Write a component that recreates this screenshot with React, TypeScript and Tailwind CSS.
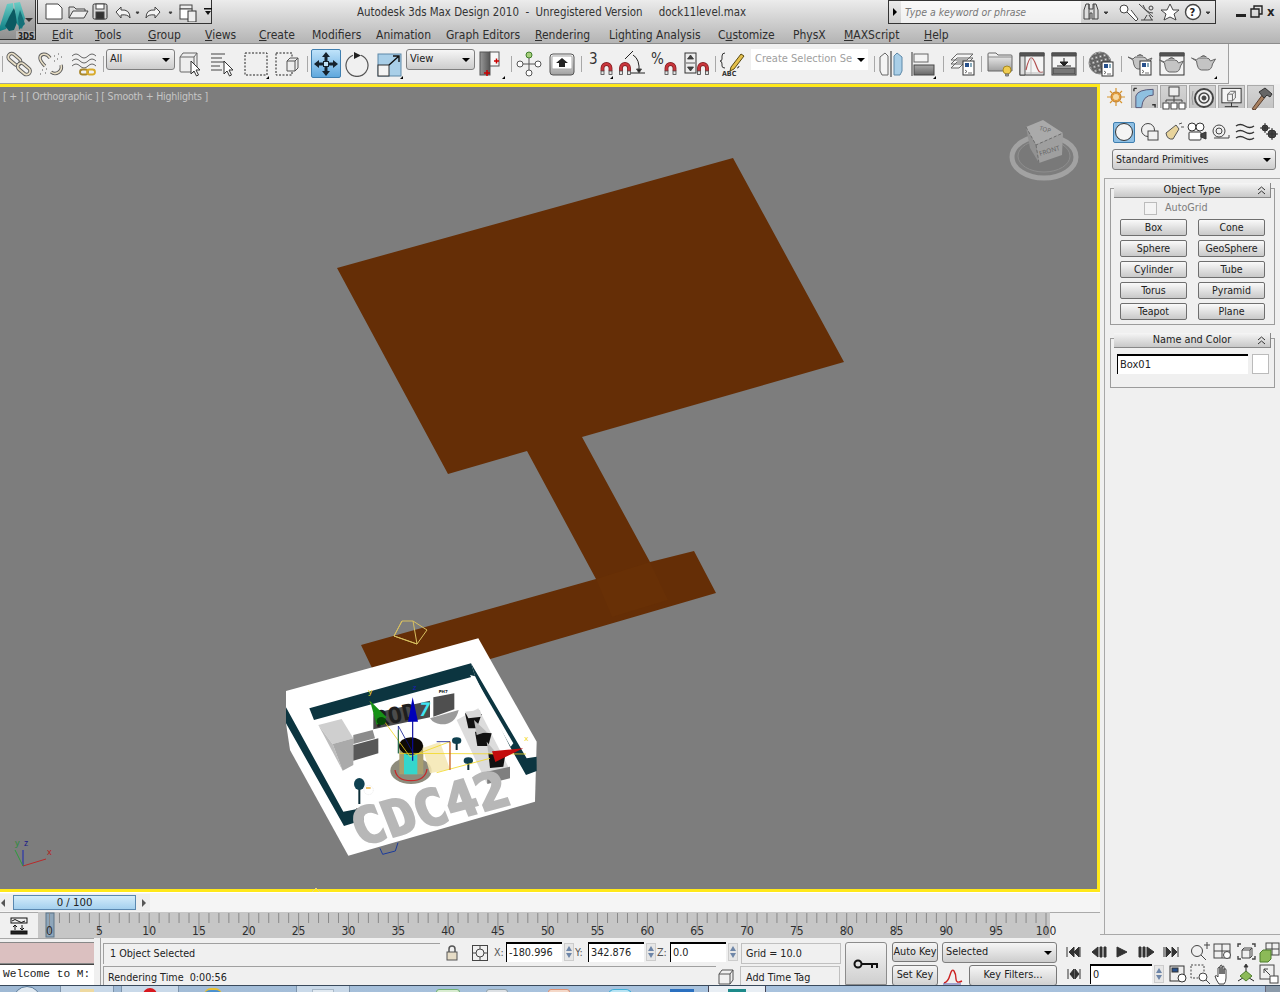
import React from "react";

const F = "font-['DejaVu_Sans_Condensed','Noto_Sans',sans-serif]";
const SF = "DejaVu Sans Condensed, Noto Sans, sans-serif";
type P = { children?: React.ReactNode; className?: string };

const Ic = ({ children, s = 26, vb = 26 }: { children?: React.ReactNode; s?: number; vb?: number }) => (
  <svg width={s} height={s} viewBox={`0 0 ${vb} ${vb}`} fill="none" stroke="#4c4c4c" strokeWidth="1">{children}</svg>
);
const Slot = ({ children, className = "", fly }: P & { fly?: boolean }) => (
  <div className={`relative w-[32px] h-[30px] shrink-0 flex items-center justify-center ${className}`}>
    {children}
    {fly && <div className="absolute right-[3px] bottom-[0px] w-0 h-0 border-l-[3px] border-l-transparent border-b-[3px] border-b-black" />}
  </div>
);
const Sep = ({ className = "" }: P) => <div className={`w-px h-[16px] shrink-0 bg-[#a8a8a8] ${className}`} />;
const Caret = ({ className = "" }: P) => (
  <div className={`w-0 h-0 border-l-[4px] border-r-[4px] border-t-[4px] border-l-transparent border-r-transparent border-t-black ${className}`} />
);
const Dropdown = ({ label, className = "" }: P & { label: string }) => (
  <div className={`h-[21px] shrink-0 flex items-center justify-between pl-[3px] pr-[4px] border border-[#7f7f7f] rounded-[3px] bg-gradient-to-b from-[#f6f6f6] to-[#cdcdcd] text-[#222] ${className}`}>
    <span>{label}</span>
    <Caret />
  </div>
);

const Chain = () => (
  <>
    {[0, 1].map((i) => (
      <g key={i} transform={i ? "translate(9.5 9.5)" : ""}>
        <rect x="1.5" y="4.5" width="14" height="7" rx="3.5" transform="rotate(40 8 8)" stroke="#5c5c5c" strokeWidth="3.6" />
        <rect x="1.5" y="4.5" width="14" height="7" rx="3.5" transform="rotate(40 8 8)" stroke="#e9dfc6" strokeWidth="1.8" />
      </g>
    ))}
  </>
);
const Unlink = () => (
  <>
    <path d="M12 7 C8 1 2 3 2 7 C2 10 4 12 7 15" stroke="#5c5c5c" strokeWidth="3.4" />
    <path d="M12 7 C8 1 2 3 2 7 C2 10 4 12 7 15" stroke="#e9dfc6" strokeWidth="1.6" />
    <path d="M23 14 C25 20 18 25 13 21" stroke="#5c5c5c" strokeWidth="3.4" />
    <path d="M23 14 C25 20 18 25 13 21" stroke="#e9dfc6" strokeWidth="1.6" />
    <path d="M16 5h1M20 3h1M19 8h1M23 6h1M16 10h1M4 19h1M8 18h1M2 23h1M7 22h1" stroke="#555" />
  </>
);
const Bind = () => (
  <>
    <path d="M1 5q4-4 8 0t8 0t8 0M1 10q4-4 8 0t8 0t8 0M1 15q4-4 8 0t8 0t8 0" stroke="#666" />
    <rect x="9" y="18.5" width="8" height="5" rx="2.5" stroke="#a8862a" strokeWidth="1.8" />
    <rect x="16" y="18.5" width="8" height="5" rx="2.5" stroke="#d8aa2a" strokeWidth="1.8" />
  </>
);
const CursorP = ({ x, y }: { x: number; y: number }) => (
  <path transform={`translate(${x} ${y})`} d="M0 0v13l3-3 2.500 5 2-1-2.500-5h4z" fill="#fff" stroke="#333" />
);
const SelObj = () => (
  <>
    <path d="M2 6l3-4h14v15l-3 4H3q-1 0-1-1zM2 6h14v15M16 6l3-4" stroke="#666" fill="#eee" />
    <CursorP x={13} y={10} />
  </>
);
const SelName = () => (
  <>
    <path d="M1 3h14M1 7h11M1 11h13M1 15h9M1 19h11" stroke="#444" />
    <CursorP x={14} y={10} />
  </>
);
const Dashed = () => <rect x="2" y="2" width="22" height="22" strokeDasharray="2 1.500" stroke="#222" />;
const Crossing = () => (
  <>
    <rect x="1" y="2" width="16" height="22" strokeDasharray="2 1.500" stroke="#222" />
    <path d="M12 10l3-3h8v10l-3 3h-8zM12 10h8v10M20 10l3-3" fill="#eee" stroke="#555" />
  </>
);
const Move = () => (
  <svg width="26" height="26" viewBox="0 0 26 26">
    <path d="M13 1l4 5h-2.500v4h-3V6H9zM13 25l-4-5h2.500v-4h3v4H17zM1 13l5-4v2.500h4v3H6V17zM25 13l-5 4v-2.500h-4v-3h4V9z" fill="#16222c" />
    <rect x="10.500" y="10.500" width="5" height="5" fill="#bfe0f4" stroke="#16222c" />
  </svg>
);
const Rotate = () => (
  <>
    <path d="M9 4.200A11 11 0 1 0 17 4.200" stroke="#555" strokeWidth="1.200" />
    <path d="M10 1l7 3.500-7 3.500z" fill="#222" stroke="none" />
  </>
);
const Scale = () => (
  <>
    <rect x="1" y="3" width="23" height="22" fill="#a9cfe8" stroke="#5d88a8" />
    <rect x="1" y="14" width="11" height="11" fill="#f4f4f4" stroke="#333" />
    <path d="M12 14L22 5M16 5h6v6" stroke="#111" strokeWidth="1.400" />
  </>
);
const PivotI = () => (
  <>
    <rect x="1" y="1" width="10" height="23" fill="url(#gr)" stroke="#555" />
    <rect x="11" y="1" width="9" height="14" fill="#f7f7f7" stroke="#555" />
    <path d="M5 22h6M8 19v6M15 10h5M17.500 7.500v5" stroke="#c00" strokeWidth="1.500" />
  </>
);
const Manip = () => (
  <>
    <circle cx="13" cy="4" r="3" fill="#a6cf7b" stroke="#3e7d2a" />
    <circle cx="4" cy="13" r="3" stroke="#555" fill="#fff" />
    <circle cx="22" cy="13" r="3" stroke="#555" fill="#fff" />
    <circle cx="13" cy="22" r="3" stroke="#555" fill="#fff" />
    <path d="M13 7v12M7 13h12" stroke="#555" />
  </>
);
const KeyB = () => (
  <>
    <rect x="1" y="3" width="24" height="21" rx="3" fill="url(#gr2)" stroke="#555" />
    <rect x="3" y="5" width="20" height="13" rx="1" fill="#fff" stroke="#aaa" />
    <path d="M13 7l6 5h-3v4h-6v-4H7z" fill="#222" stroke="none" />
  </>
);
const Magnet = ({ x, y }: { x: number; y: number }) => (
  <g transform={`translate(${x} ${y})`}>
    <path d="M2 9V6a4 4 0 0 1 8 0v3" stroke="#7c1a1e" strokeWidth="3.800" />
    <path d="M2 9V6a4 4 0 0 1 8 0v3" stroke="#c9363c" strokeWidth="2.400" />
    <rect x=".5" y="9" width="3" height="3.500" fill="#e4e4e4" stroke="#444" strokeWidth=".8" />
    <rect x="8.500" y="9" width="3" height="3.500" fill="#e4e4e4" stroke="#444" strokeWidth=".8" />
  </g>
);
const SnapText = ({ t, x = 3, y = 13, size = 15 }: { t: string; x?: number; y?: number; size?: number }) => (
  <text x={x} y={y} fontSize={size} fill="#333" stroke="none" fontFamily={SF}>{t}</text>
);
const Angle = () => (
  <>
    <path d="M6 8L14 0M12 22h14" stroke="#222" />
    <path d="M14 4q7 4 6 17" stroke="#222" />
    <path d="M17.500 18l2.500 4 2.500-4z" fill="#222" />
    <Magnet x={0} y={11} />
  </>
);
const Spin = () => (
  <>
    <rect x="2" y="2" width="11" height="20" fill="#eee" stroke="#333" />
    <path d="M3 12h9M7.500 4l3 4h-6zM7.500 20l3-4h-6z" fill="#444" stroke="#333" strokeWidth=".8" />
    <Magnet x={14} y={11} />
  </>
);
const Named = () => (
  <>
    <path d="M6 2Q3 2 3 5v3Q3 10 1 10q2 0 2 3v2Q3 17 6 17M18 17q2 0 2-2" stroke="#333" />
    <path d="M12 16L22 3l3 2-10 13-4 2z" fill="#e4c04c" stroke="#5a4a10" />
    <text x="3" y="25" fontSize="7" fontWeight="700" fill="#333" stroke="none" fontFamily={SF}>ABC</text>
  </>
);
const Mirror = () => (
  <>
    <path d="M2 6l5-4 3 3v19H4l-2-4z" fill="#f4f4f4" stroke="#666" />
    <path d="M13 0v26" stroke="#222" />
    <path d="M24 6l-5-4-3 3v19h6l2-4z" fill="#a9cfe8" stroke="#5d88a8" />
  </>
);
const Align = () => (
  <>
    <path d="M2 1v24" stroke="#333" />
    <rect x="4" y="3" width="14" height="8" fill="#f4f4f4" stroke="#666" />
    <rect x="4" y="14" width="20" height="10" fill="url(#gr3)" stroke="#444" />
  </>
);
const Script = ({ x, y }: { x: number; y: number }) => (
  <g transform={`translate(${x} ${y})`}>
    <rect x="0" y="0" width="11" height="14" fill="#fff" stroke="#333" />
    <rect x="2" y="2" width="4" height="4" fill="#27508c" stroke="none" />
    <rect x="7" y="2" width="2" height="4" fill="#8ab" stroke="none" />
    <path d="M2 9l2 1.500-2 1.500M5 12h4" stroke="#333" strokeWidth=".7" />
  </g>
);
const Layers = () => (
  <>
    <path d="M8 3h16l-6 6H2zM8 7h16l-6 6H2zM8 11h8l-6 6H2z" fill="#f4f4f4" stroke="#666" />
    <Script x={14} y={10} />
  </>
);
const Explorer = () => (
  <>
    <path d="M1 3q0-1 1-1h7l2 2h13q1 0 1 1v15H1z" fill="url(#gr2)" stroke="#666" />
    <path d="M1 6h24" stroke="#888" />
    <circle cx="20" cy="19" r="4" fill="#f0cc50" stroke="#a88a20" />
    <path d="M18.500 23h3v2h-3z" fill="#999" stroke="#777" />
  </>
);
const Curve = () => (
  <>
    <rect x="1" y="2" width="24" height="22" fill="#f4f4f4" stroke="#333" />
    <path d="M1 2h24v3H1z" fill="#555" />
    <path d="M1 5h5v19H1z" fill="#ddd" />
    <path d="M7 19c4-18 7-13 10-5s4 8 7 7" stroke="#b25050" strokeWidth="1.200" />
    <path d="M7 22h17M12 5v18" stroke="#bbb" />
  </>
);
const Schematic = () => (
  <>
    <rect x="1" y="2" width="24" height="22" fill="#f4f4f4" stroke="#333" />
    <path d="M1 2h24v3H1z" fill="#555" />
    <rect x="2" y="17" width="22" height="6" fill="#777" stroke="#444" />
    <path d="M13 7v6M9 11l4 4 4-4zM6 15h14" stroke="#222" fill="#222" />
  </>
);
const Checker = () => (
  <>
    <defs>
      <pattern id="chk" width="6" height="6" patternUnits="userSpaceOnUse" patternTransform="rotate(30)">
        <rect width="6" height="6" fill="#e4e4e4" />
        <rect width="3" height="3" fill="#777" />
        <rect x="3" y="3" width="3" height="3" fill="#777" />
      </pattern>
    </defs>
    <circle cx="12" cy="12" r="11" fill="url(#chk)" stroke="#888" />
    <Script x={14} y={11} />
  </>
);
const Pot = ({ x = 0, y = 0, fill = "#c4c4c4" }: { x?: number; y?: number; fill?: string }) => (
  <g transform={`translate(${x} ${y})`}>
    <path d="M1 5l5 3q1 9 5 9h6q4 0 5-6l3-5-5 2q-1-3-4-3H8L6 7z" fill={fill} stroke="#666" />
    <path d="M10 4q3-3 6 0" fill="#888" stroke="#666" />
  </g>
);
const Frame = () => (
  <>
    <rect x="1" y="2" width="24" height="22" fill="#f4f4f4" stroke="#333" />
    <path d="M1 2h24v3H1z" fill="#555" />
    <Pot x={-.5} y={4} />
  </>
);

const Logo = () => (
  <svg width="36" height="40" viewBox="0 0 36 40">
    <defs>
      <linearGradient id="lg" x1="0" x2="0" y1="0" y2="1"><stop offset="0" stopColor="#6ccdc6" /><stop offset="1" stopColor="#0d7f84" /></linearGradient>
      <linearGradient id="lb" x1="0" x2="0" y1="0" y2="1"><stop offset="0" stopColor="#c2c2c2" /><stop offset="1" stopColor="#8e8e8e" /></linearGradient>
      <linearGradient id="gr" x1="0" x2="1" y1="0" y2="0"><stop offset="0" stopColor="#999" /><stop offset="1" stopColor="#555" /></linearGradient>
      <linearGradient id="gr2" x1="0" x2="0" y1="0" y2="1"><stop offset="0" stopColor="#f8f8f8" /><stop offset="1" stopColor="#a0a0a0" /></linearGradient>
      <linearGradient id="gr3" x1="0" x2="0" y1="0" y2="1"><stop offset="0" stopColor="#aaa" /><stop offset="1" stopColor="#666" /></linearGradient>
    </defs>
    <rect width="36" height="40" fill="url(#lb)" />
    <polygon points="0,26 7,4 13,3 14,14 6,29 0,31" fill="url(#lg)" />
    <polygon points="9,17 14,8 18,20 14,30 9,31 5,26" fill="#0b5a62" />
    <polygon points="14,3 20,2 25,18 22,29 17,24" fill="url(#lg)" />
    <polygon points="18,18 20,10 25,24 19,30" fill="#157078" />
    <path d="M25 18h8l-4 4z" fill="#333" />
    <rect x="16" y="31" width="20" height="9" fill="#b0b0b0" />
    <text x="18" y="38.500" fontSize="8" fontWeight="700" fill="#222" fontFamily={SF}>3DS</text>
  </svg>
);

const QA = () => (
  <svg width="174" height="22" viewBox="0 0 174 22" fill="none" stroke="#444" className="block">
    <path d="M8 4h12l4 4v11H8z" fill="#fff" />
    <path d="M31 7h5l2 2h9v2M31 18V7M31 18l4-7h15l-4 7z" fill="#eee" />
    <rect x="55" y="4" width="14" height="15" rx="1.500" fill="#d8d8d8" stroke="#333" />
    <rect x="58" y="12" width="8" height="7" fill="#333" />
    <rect x="58" y="4" width="8" height="5" fill="#fff" />
    <path d="M78 12l5-5v3q9-1 9 8q-2-4-9-3v3z" fill="#f4f4f4" />
    <path d="M98 12l3 0-1.500 2z" fill="#333" />
    <path d="M122 12l-5-5v3q-9-1-9 8q2-4 9-3v3z" fill="#f4f4f4" />
    <path d="M131 12l3 0-1.500 2z" fill="#333" />
    <rect x="142" y="5" width="12" height="4" fill="#eee" />
    <rect x="142" y="9" width="12" height="10" fill="#fff" />
    <rect x="150" y="11" width="8" height="11" fill="#eee" stroke="#333" />
    <path d="M166 8h8v1.500h-8zM167 11h6l-3 4z" fill="#111" stroke="none" />
  </svg>
);

const SearchIcons = () => (
  <svg width="134" height="22" viewBox="0 0 134 22" fill="none" stroke="#444" className="block shrink-0">
    <path d="M3 9l2-6h3v5h4V3h3l2 6v9h-6v-6h-2v6H3z" fill="#ddd" />
    <path d="M8 3v15M13 3v15" />
    <path d="M23 11h4l-2 2z" fill="#333" />
    <g transform="translate(5 0)">
      <circle cx="38" cy="8" r="4" fill="#fff" />
      <path d="M41 11l9 9 2-2-7-9" fill="#fff" />
    </g>
    <g transform="translate(-4 0)">
      <path d="M66 4q3 8 10 8M62 3l14 13M64 19h12M70 14l-3 5M72 14l3 5" />
      <circle cx="74" cy="7" r="2" />
    </g>
    <path d="M89 3l3 6h6l-5 4 2 6-6-3-6 3 2-6-5-4h6z" fill="#fff" />
    <circle cx="112" cy="11" r="7.500" fill="#fff" strokeWidth="1.400" />
    <text x="108.500" y="15" fontSize="11" fontWeight="700" fill="#222" stroke="none" fontFamily={SF}>?</text>
    <path d="M125 11h4l-2 2z" fill="#333" />
  </svg>
);

const menu: [string, string, string, string][] = [
  ["", "E", "dit", "w-[43px]"], ["", "T", "ools", "w-[53px]"], ["", "G", "roup", "w-[57px]"], ["", "V", "iews", "w-[54px]"],
  ["", "C", "reate", "w-[53px]"], ["Modifiers", "", "", "w-[64px]"], ["Animation", "", "", "w-[70px]"], ["Graph Editors", "", "", "w-[89px]"],
  ["", "R", "endering", "w-[74px]"], ["Lighting Analysis", "", "", "w-[109px]"], ["C", "u", "stomize", "w-[75px]"], ["PhysX", "", "", "w-[51px]"],
  ["", "M", "AXScript", "w-[80px]"], ["", "H", "elp", "w-[40px]"],
];

const Header = () => (
  <div className="h-[44px] flex bg-gradient-to-b from-[#ececec] to-[#b4b4b4] border-b border-[#8c8c8c] text-[12px] text-[#2a2a2a]">
    <div className="w-[36px] h-[40px] border-r border-b border-[#333] shrink-0 overflow-hidden"><Logo /></div>
    <div className="flex-1 flex flex-col min-w-0">
      <div className="h-[24px] flex items-start">
        <div className="w-[175px] h-[24px] ml-px border border-[#333] border-t-0 shrink-0"><QA /></div>
        <div className="ml-[145px] w-[532px] shrink-0 h-[24px] leading-[24px] text-[11.4px] whitespace-pre text-[#333]">Autodesk 3ds Max Design 2010  -  Unregistered Version     dock11level.max</div>
        <div className="ml-[-1px] w-[328px] h-[24px] border border-[#333] shrink-0 flex items-center">
          <div className="w-[13px] flex justify-center"><div className="w-0 h-0 border-t-[4px] border-b-[4px] border-l-[4px] border-t-transparent border-b-transparent border-l-black" /></div>
          <div className="w-[180px] h-full bg-white/70 text-[10.4px] italic text-[#777] leading-[22px] pl-[4px] shrink-0">Type a keyword or phrase</div>
          <SearchIcons />
        </div>
        <div className="ml-[20px] flex items-center h-[22px] gap-[4px] text-[14px] font-bold leading-none text-[#222]">
          <div className="w-[10px] h-[3px] bg-[#222] mt-[8px]" />
          <svg width="13" height="13" viewBox="0 0 13 13" fill="none" stroke="#222" strokeWidth="1.400"><path d="M4 4V1h8v8H9M1 4h8v8H1z" /></svg>
          <span className="text-[13px]">x</span>
        </div>
      </div>
      <div className="h-[19px] flex items-center pt-[2px] pl-[16px] text-[12px] text-[#2e2e2e]">
        {menu.map(([a, u, b, w], i) => (
          <div key={i} className={`${w} shrink-0`}>{a}{u && <span className="underline">{u}</span>}{b}</div>
        ))}
      </div>
    </div>
  </div>
);

const Toolbar = () => (
  <div className="h-[40px] flex bg-[#f4f4f4]">
    <div className="w-[1229px] h-[40px] bg-[#f0f0f0] border-r border-b border-[#a0a0a0] flex items-center shrink-0">
      <Sep className="ml-[2px]" />
      <Slot><Ic><Chain /></Ic></Slot>
      <Slot><Ic><Unlink /></Ic></Slot>
      <Slot className="ml-px"><Ic><Bind /></Ic></Slot>
      <Sep className="ml-[3px]" />
      <Dropdown label="All" className="ml-[2px] w-[69px] self-start mt-[5px] text-[11px]" />
      <Slot><Ic><SelObj /></Ic></Slot>
      <Slot><Ic><SelName /></Ic></Slot>
      <Slot className="ml-px" fly><Ic><Dashed /></Ic></Slot>
      <Slot><Ic><Crossing /></Ic></Slot>
      <Sep className="ml-[3px]" />
      <div className="ml-[3px] w-[30px] h-[29px] rounded-[2px] border border-[#3f7fb0] bg-gradient-to-b from-[#bfe3fa] to-[#5fa8dd] flex items-center justify-center shrink-0"><Move /></div>
      <Slot><Ic><Rotate /></Ic></Slot>
      <Slot className="ml-px" fly><Ic><Scale /></Ic></Slot>
      <Dropdown label="View" className="w-[69px] self-start mt-[5px] text-[11px]" />
      <Slot className="ml-px" fly><Ic><PivotI /></Ic></Slot>
      <Sep className="ml-[3px]" />
      <Slot className="ml-px"><Ic><Manip /></Ic></Slot>
      <Slot className="ml-px"><Ic><KeyB /></Ic></Slot>
      <Sep className="ml-[3px]" />
      <Slot className="ml-[2px]" fly><Ic><SnapText t="3" x={2} /><Magnet x={13.500} y={11} /></Ic></Slot>
      <Slot><Ic><Angle /></Ic></Slot>
      <Slot><Ic><SnapText t="%" x={0} /><Magnet x={13.500} y={11} /></Ic></Slot>
      <Slot><Ic><Spin /></Ic></Slot>
      <Sep className="ml-[3px]" />
      <Slot><Ic><Named /></Ic></Slot>
      <div className="ml-[3px] w-[117px] h-[21px] shrink-0 bg-white flex items-center justify-between pl-[4px] pr-[3px] text-[11px] text-[#a0a0a0] self-start mt-[5px]">
        <span className="whitespace-nowrap">Create Selection Se</span><Caret />
      </div>
      <Sep className="ml-[6px]" />
      <Slot><Ic><Mirror /></Ic></Slot>
      <Slot fly><Ic><Align /></Ic></Slot>
      <Sep className="ml-[4px]" />
      <Slot className="ml-[2px]"><Ic><Layers /></Ic></Slot>
      <Sep className="ml-[3px]" />
      <Slot className="ml-[2px]"><Ic><Explorer /></Ic></Slot>
      <Slot><Ic><Curve /></Ic></Slot>
      <Slot><Ic><Schematic /></Ic></Slot>
      <Sep className="ml-[3px]" />
      <Slot className="ml-px"><Ic><Checker /></Ic></Slot>
      <Sep className="ml-[4px]" />
      <Slot className="ml-[2px]"><Ic><Pot y={1} /><Script x={13} y={10} /></Ic></Slot>
      <Slot><Ic><Frame /></Ic></Slot>
      <Slot fly><Ic><Pot x={-.5} y={2} /></Ic></Slot>
    </div>
  </div>
);

const Scene = () => (
  <svg viewBox="0 84 1100 808" width="1100" height="808" className="block">
    <rect x="0" y="84" width="1100" height="808" fill="#ffe81a" />
    <rect x="0" y="87" width="1097" height="802" fill="#7d7d7d" />
    <polygon points="337,268 733,158 844,362 582,437 650,562 694,551 716,593 480,662 372,668 361,645 596,579 527,451 448,474" fill="#652e06" />
    <polygon points="596,579 650,562 668,600 612,617" fill="#683006" />
    <path d="M312 892l4-4 4 4" stroke="#e8d878" fill="none" />
    <path d="M394 636L402 621H413L427 630L417 644ZM413 621L417 644M402 621L394 636M394 636L417 644" stroke="#d8c060" fill="none" />

    <g transform="translate(270 610) scale(.33333)">
      <path d="M330 715l8 18 38-10 8-25" stroke="#1a3a9c" strokeWidth="3" fill="none" />
      <polygon points="48,243 625,85 800,395 795,575 235,737 60,420 48,340" fill="#fff" />
      <polygon points="118,295 603,160 615,198 132,330" fill="#0c3540" />
      <polygon points="603,160 770,445 800,440 800,483 768,495 720,410 615,198" fill="#0c3540" />
      <polygon points="722,410 600,195 612,198 730,400" fill="#fff" />
      <polygon points="48,292 220,605 277,594 280,630 222,648 48,340" fill="#0c3540" />
      <rect x="258" y="595" width="22" height="40" fill="#555" />

      <polygon points="145,345 215,327 250,385 188,402" fill="#cfcfcf" />
      <polygon points="145,345 188,402 218,482" fill="#bdbdbd" />
      <polygon points="188,402 250,385 250,465 218,482" fill="#aaaaaa" />
      <polygon points="250,375 308,360 315,385 250,402" fill="#8c8c8c" />
      <polygon points="250,405 325,385 325,430 250,452" fill="#585858" />
      <polygon points="310,310 480,272 480,322 310,358" fill="#4b4b4b" />
      <polygon points="490,262 553,250 553,298 490,320" fill="#4f4f4f" />
      <path d="M480 325 L566 300 Q556 345 512 343 Q490 340 480 325z" fill="#9b9b9b" />
      <polygon points="560,330 625,295 720,480 650,520" fill="#dcdcdc" />
      <polygon points="650,485 720,470 720,505 652,522" fill="#7f7f7f" />
      <polygon points="585,310 635,312 620,355 595,355" fill="#111" />
      <polygon points="585,305 630,300 635,320 595,325" fill="#d8d8d8" />
      <polygon points="615,365 665,370 655,408 622,408" fill="#111" />
      <polygon points="612,330 650,365 620,375" fill="#bbb" />
      <polygon points="655,430 705,440 700,470 660,474" fill="#111" />
      <polygon points="650,395 680,430 655,428" fill="#bbb" />

      {[[560, 392], [595, 452], [268, 522]].map(([x, y], i) => (
        <g key={i}>
          <rect x={x - 3} y={y} width="6" height={i === 2 ? 60 : 28} fill="#0c2e38" />
          <ellipse cx={x} cy={y} rx={i === 2 ? 16 : 14} ry={i === 2 ? 18 : 10} fill="#0f4050" />
        </g>
      ))}
      <circle cx="296" cy="540" r="14" fill="#fff" stroke="#ccc" strokeDasharray="3 2" />
      <path d="M288 532h14v4h-14z" fill="#e8a820" />

      <text transform="translate(268 708) rotate(-15.500) skewX(6)" fontSize="150" fontWeight="700" fill="#b7b7b7" stroke="#b7b7b7" strokeWidth="7" fontFamily="DejaVu Sans Mono, monospace" textLength="480" lengthAdjust="spacingAndGlyphs">CDC42</text>
      <text transform="translate(318 352) rotate(-13)" fontSize="66" fontWeight="700" fill="#1e1e1e" fontFamily="DejaVu Sans Mono, monospace" textLength="128" lengthAdjust="spacingAndGlyphs">ROD</text>
      <text transform="translate(445 318) skewX(-8)" fontSize="56" fontWeight="700" fill="#3fe5f2" fontFamily="DejaVu Sans Mono, monospace">7</text>
      <text x="506" y="249" fontSize="12" fontWeight="700" fill="#222" fontFamily="DejaVu Sans, sans-serif">PH7</text>

      <ellipse cx="423" cy="482" rx="62" ry="40" fill="#8e8b7c" />
      <path d="M375 480q5 32 48 32t48-35" stroke="#c42a2a" strokeWidth="4" fill="none" />
      <rect x="388" y="405" width="72" height="88" fill="#a89f70" />
      <rect x="402" y="405" width="40" height="88" fill="#35d6cc" />
      <ellipse cx="423" cy="408" rx="36" ry="26" fill="#0e0a06" />

      <polygon points="458,414 510,396 540,478 480,490" fill="#f5e6b0" fillOpacity=".85" />
      <path d="M300 275L420 440L540 395L540 478M388 430L768 432M500 488L660 445" stroke="#f2d81f" strokeWidth="2.400" fill="none" />
      <path d="M385 348V430M385 348L430 430M540 395H500" stroke="#0a148c" strokeWidth="2.400" fill="none" />
      <path d="M385 360v70" stroke="#1b7c1b" strokeWidth="2.400" />
      <path d="M540 395v85" stroke="#b01515" strokeWidth="2.400" />
      <path d="M428 320V452" stroke="#0a0a9c" strokeWidth="3.500" />
      <polygon points="428,262 414,335 444,335" fill="#0000b8" />
      <polygon points="300,272 350,322 320,345" fill="#169116" />
      <ellipse cx="334" cy="333" rx="14" ry="12" fill="#064a06" />
      <polygon points="760,415 666,424 676,456" fill="#c40c0c" />
      <text x="295" y="252" fontSize="24" fill="#f2d81f" fontFamily="Noto Sans, sans-serif">y</text>
      <text x="428" y="240" fontSize="24" fill="#1c1cb8" fontFamily="Noto Sans, sans-serif">z</text>
      <text x="763" y="394" fontSize="24" fill="#f2d81f" fontFamily="Noto Sans, sans-serif">x</text>
    </g>

    <path d="M23 866V850" stroke="#1a28b4" fill="none" />
    <path d="M23 866L46 859" stroke="#b82a2a" />
    <path d="M23 866L15 850" stroke="#2c9c3c" />
    <text x="24" y="846" fontSize="9" fill="#1a1a88" fontFamily="Noto Sans, sans-serif">z</text>
    <text x="47" y="855" fontSize="9" fill="#b82020" fontFamily="Noto Sans, sans-serif">x</text>
    <text x="15" y="846" fontSize="9" fill="#2c8c3c" fontFamily="Noto Sans, sans-serif">y</text>

    <ellipse cx="1044" cy="157" rx="32" ry="21" fill="none" stroke="#a2a2a2" strokeWidth="5" />
    <ellipse cx="1044" cy="156" rx="26" ry="16" fill="#797979" stroke="#8e8e8e" />
    <polygon points="1026,127 1043,120 1063,133 1036,145" fill="#aaaaaa" />
    <polygon points="1036,145 1063,133 1062,155 1039,163" fill="#9f9f9f" />
    <polygon points="1026,127 1036,145 1039,163 1030,148" fill="#929292" />
    <path d="M1026 127l10 18 27-12M1036 145l3 18" stroke="#6e6e6e" strokeDasharray="3 2" fill="none" />
    <text transform="translate(1039 130) rotate(15)" fontSize="6" fill="#666" fontFamily="Noto Sans, sans-serif">TOP</text>
    <text transform="translate(1040 156) rotate(-17)" fontSize="6.500" fill="#666" fontFamily="Noto Sans, sans-serif">FRONT</text>
  </svg>
);

const ticks = Array.from({ length: 101 }, (_, i) => i);
const Ruler = () => (
  <svg viewBox="38 912 1012 26" width="1012" height="26" className="block overflow-visible">
    <rect x="38" y="912" width="1012" height="26" fill="#c6c6c6" />
    <rect x="46" y="913" width="8" height="24" fill="#8ea6ba" stroke="#5d7488" />
    {ticks.map((i) => {
      const x = 49.5 + i * 9.965;
      return <path key={i} d={`M${x} 913V${i % 5 ? 923 : 933}`} stroke="#8a8a8a" />;
    })}
    {ticks.filter((i) => i % 5 === 0).map((i) => (
      <text key={i} x={49.5 + i * 9.965} y="935" fontSize="12" textAnchor="middle" fill="#2e2e2e" fontFamily={SF}>{i}</text>
    ))}
  </svg>
);

const PanelIcons = {
  create: <svg width="20" height="20" viewBox="0 0 20 20"><circle cx="10" cy="10" r="5" fill="#eaa24a" stroke="#b5752a" /><path d="M10 1v18M1 10h18M4 4l12 12M16 4L4 16" stroke="#d8952f" strokeWidth="1.200" /><circle cx="10" cy="10" r="3" fill="#f5d9a6" /></svg>,
  modify: <svg width="26" height="24" viewBox="0 0 26 24" fill="none"><path d="M4 22V10Q6 3 22 3v6Q11 9 10 22z" fill="#8fc0e0" stroke="#557" /><path d="M2 2h3M2 2v3M21 19h3v3" stroke="#333" strokeWidth="1.500" /></svg>,
  hier: <svg width="24" height="24" viewBox="0 0 24 24" fill="none" stroke="#444"><rect x="7" y="1" width="10" height="9" fill="#eee" /><path d="M12 10v4M4 14h16M4 14v2M12 14v2M20 14v2" /><rect x="1" y="17" width="6" height="6" fill="#fff" /><rect x="9" y="17" width="6" height="6" fill="#fff" /><rect x="17" y="17" width="6" height="6" fill="#fff" /></svg>,
  motion: <svg width="24" height="24" viewBox="0 0 24 24" fill="none" stroke="#444"><circle cx="13" cy="12" r="9" fill="#eee" strokeWidth="2" /><circle cx="13" cy="12" r="5" strokeWidth="1.500" /><circle cx="13" cy="12" r="2" fill="#444" /><path d="M2 5Q0 12 2 19" stroke="#999" /></svg>,
  display: <svg width="26" height="24" viewBox="0 0 26 24" fill="none" stroke="#333"><rect x="3" y="2" width="20" height="15" fill="#f4f4f4" /><path d="M9 8l3-3h5v7l-3 3H9zM9 8h5v7M14 8l3-3" stroke="#666" /><path d="M6 21h14M13 17v4" /></svg>,
  util: <svg width="24" height="24" viewBox="0 0 24 24"><path d="M3 23L14 8l3 2L6 24z" fill="#a88060" stroke="#5a4030" /><path d="M10 6l6-4 7 6-2 3-3-2-3 3z" fill="#666" stroke="#333" /></svg>,
};

const Btn = ({ t }: { t: string }) => (
  <div className="w-[67px] h-[17px] border border-[#6f6f6f] rounded-[2px] bg-gradient-to-b from-[#fafafa] to-[#c9c9c9] text-[10.5px] text-[#222] leading-[15px] text-center whitespace-nowrap">{t}</div>
);
const RollHead = ({ t }: { t: string }) => (
  <div className="h-[15px] mx-[3px] -mt-[6px] flex items-center bg-gradient-to-b from-[#f6f6f6] to-[#c8c8c8] border-r border-b border-[#888] text-[10.8px] text-[#222] relative">
    <span className="flex-1 text-center">{t}</span>
    <svg width="9" height="9" viewBox="0 0 9 9" fill="none" stroke="#333" className="absolute right-[4px] top-[3px]"><path d="M1 4l3.500-3 3.500 3M1 8l3.500-3 3.500 3" /></svg>
  </div>
);

const tabs = [PanelIcons.create, PanelIcons.modify, PanelIcons.hier, PanelIcons.motion, PanelIcons.display, PanelIcons.util];
const prims = [
  <svg key="a" width="20" height="20" viewBox="0 0 20 20"><circle cx="10" cy="10" r="8.500" fill="#f4f4f4" stroke="#333" /></svg>,
  <svg key="b" width="20" height="20" viewBox="0 0 20 20" fill="none" stroke="#444"><circle cx="8" cy="8" r="6.500" /><rect x="8" y="9" width="10" height="9" fill="#f0f0f0" /></svg>,
  <svg key="c" width="20" height="20" viewBox="0 0 20 20" stroke="#555"><path d="M2 11L12 3l3 4-6 10q-6 1-7-6z" fill="#e8d49c" /><path d="M15 2l3-1M17 5l3 0" /></svg>,
  <svg key="d" width="22" height="20" viewBox="0 0 22 20" fill="#fff" stroke="#333"><circle cx="6" cy="5" r="4" /><circle cx="14" cy="5" r="4" /><rect x="3" y="10" width="12" height="8" rx="1" /><path d="M15 12l5-2v7l-5-2z" fill="#444" /></svg>,
  <svg key="e" width="20" height="20" viewBox="0 0 20 20" fill="none" stroke="#444"><circle cx="8" cy="9" r="6" /><circle cx="8" cy="9" r="3" /><path d="M3 16h15v-3" /></svg>,
  <svg key="f" width="20" height="20" viewBox="0 0 20 20" fill="none" stroke="#333"><path d="M1 4q4-3 9 0t9 0M1 10q4-3 9 0t9 0M1 16q4-3 9 0t9 0" strokeWidth="1.400" /></svg>,
  <svg key="g" width="20" height="20" viewBox="0 0 20 20" fill="#444" stroke="#333"><circle cx="7" cy="6" r="3" /><circle cx="14" cy="12" r="4" /><path d="M7 1v10M2 6h10M14 6v12M8 12h12" /></svg>,
];

const CommandPanel = () => (
  <div className="w-[180px] shrink-0 h-[854px] bg-[#f0f0f0] flex flex-col">
    <div className="h-[24px] pl-[2px] flex items-end gap-[2px] shrink-0">
      {tabs.map((ic, i) => (
        <div key={i} className={`w-[27px] flex items-center justify-center pt-[2px] ${i === 0 ? "h-[24px] bg-[#f0f0f0]" : "h-[23px] bg-gradient-to-b from-[#d4d4d4] to-[#c4c4c4] border border-b-0 border-[#aaa]"}`}>{ic}</div>
      ))}
    </div>
    <div className="h-[36px] mt-[6px] flex items-center pl-[13px] shrink-0">
      <div className="w-[22px] h-[21px] rounded-[2px] border border-[#3f7fb0] bg-[#8fc0e4] flex items-center justify-center mr-[3px]">{prims[0]}</div>
      {prims.slice(1).map((p, i) => <div key={i} className="w-[24px] flex justify-center">{p}</div>)}
    </div>
    <Dropdown label="Standard Primitives" className="ml-[12px] -mt-[1px] w-[164px] text-[10.5px]" />
    <div className="ml-[4px] mt-[8px] flex-1 border-l border-t border-[#a8a8a8] pl-[5px] pr-[5px] pt-[9px] flex flex-col">
      <div className="border border-[#9c9c9c] h-[137px] shrink-0 flex flex-col">
        <RollHead t="Object Type" />
        <div className="h-[21px] flex items-center pl-[33px] gap-[8px] shrink-0">
          <div className="w-[13px] h-[13px] border border-[#bcbcbc] bg-[#f4f4f4]" />
          <span className="text-[10.7px] text-[#7d7d7d]">AutoGrid</span>
        </div>
        <div className="grid grid-cols-[67px_67px] gap-x-[11px] gap-y-[4px] pl-[9px]">
          {["Box", "Cone", "Sphere", "GeoSphere", "Cylinder", "Tube", "Torus", "Pyramid", "Teapot", "Plane"].map((t) => <Btn key={t} t={t} />)}
        </div>
      </div>
      <div className="border border-[#9c9c9c] h-[50px] mt-[13px] shrink-0 flex flex-col">
        <RollHead t="Name and Color" />
        <div className="flex pl-[6px] pt-[6px] gap-[4px]">
          <div className="w-[131px] h-[20px] bg-white border-t-2 border-l border-black text-[11px] leading-[18px] pl-[2px] text-[#222]">Box01</div>
          <div className="w-[17px] h-[20px] bg-white border border-[#bbb]" />
        </div>
      </div>
    </div>
    <div className="h-[4px] shrink-0 border-t border-[#a8a8a8]" />
  </div>
);

const Field = ({ v, w = "w-[56px]" }: { v: string; w?: string }) => (
  <div className={`${w} h-[20px] bg-white border-l border-t-2 border-black text-[10.8px] leading-[18px] pl-[2px] text-[#222] shrink-0`}>{v}</div>
);
const Spinner = () => (
  <div className="w-[10px] h-[18px] flex flex-col items-center justify-center gap-[2px] bg-[#e6e6e6] border border-[#ccc] shrink-0">
    <div className="w-0 h-0 border-l-[3px] border-r-[3px] border-b-[5px] border-l-transparent border-r-transparent border-b-[#6e86a8]" />
    <div className="w-0 h-0 border-l-[3px] border-r-[3px] border-t-[5px] border-l-transparent border-r-transparent border-t-[#6e86a8]" />
  </div>
);
const KeyBtn = ({ t, className = "" }: P & { t: string }) => (
  <div className={`border border-[#777] rounded-[3px] bg-gradient-to-b from-[#f6f6f6] to-[#d0d0d0] text-[10.8px] text-center text-[#222] leading-[18px] shrink-0 whitespace-nowrap ${className}`}>{t}</div>
);
const Tr = ({ d, w = 24, className = "" }: P & { d: string; w?: number }) => (
  <svg width={w} height="20" viewBox={`0 0 ${w} 20`} className={`shrink-0 ${className}`}><path d={d} fill="#333" stroke="#333" /></svg>
);
const Nav = ({ children }: P) => (
  <svg width="23" height="22" viewBox="0 0 23 22" fill="none" stroke="#444" className="shrink-0">{children}</svg>
);

const Status = () => (
  <div className="h-[47px] flex bg-[#f0f0f0] text-[10.7px] text-[#222] overflow-hidden">
    <div className="w-[94px] shrink-0 flex flex-col pt-[3px] border-t border-[#a8a8a8]">
      <div className="h-[22px] bg-[#dbc0c0] border-y border-[#888]" />
      <div className="h-[21px] bg-white border-t border-[#444] text-[11.2px] leading-[19px] pl-[3px] font-['Liberation_Mono',monospace] whitespace-nowrap">Welcome to M:</div>
    </div>
    <div className="w-px ml-[6px] bg-[#a0a0a0] h-[47px] shrink-0" />
    <div className="w-[744px] shrink-0 pl-[2px] flex flex-col">
      <div className="h-[25px] pt-[5px] flex items-start">
        <div className="w-[337px] h-[21px] border-t border-l border-[#a0a0a0] pl-[6px] leading-[20px] shrink-0">1 Object Selected</div>
        <svg width="14" height="16" viewBox="0 0 14 16" className="ml-[5px] mt-[2px] shrink-0" fill="none" stroke="#555"><path d="M4 7V4a3 3 0 0 1 6 0v3" strokeWidth="1.500" /><rect x="2" y="7" width="10" height="8" fill="#e6dcc6" /></svg>
        <svg width="16" height="16" viewBox="0 0 16 16" className="ml-[13px] mt-[2px] shrink-0" fill="none" stroke="#444"><rect x=".5" y=".5" width="15" height="15" /><circle cx="8" cy="8" r="4" /><path d="M8 1v3M8 12v3M1 8h3M12 8h3" /></svg>
        <span className="ml-[6px] w-[12px] shrink-0 mt-[2px] text-[#555]">X:</span>
        <div className="-mt-[1px] flex items-center"><Field v="-180.996" /><div className="ml-[2px]"><Spinner /></div></div>
        <span className="ml-[1px] w-[13px] shrink-0 mt-[2px] text-[#555]">Y:</span>
        <div className="-mt-[1px] flex items-center"><Field v="342.876" /><div className="ml-[2px]"><Spinner /></div></div>
        <span className="ml-[1px] w-[13px] shrink-0 mt-[2px] text-[#555]">Z:</span>
        <div className="-mt-[1px] flex items-center"><Field v="0.0" /><div className="ml-[2px]"><Spinner /></div></div>
        <div className="ml-[3px] w-[100px] h-[21px] border border-[#c0c0c0] pl-[4px] leading-[19px] shrink-0">Grid = 10.0</div>
      </div>
      <div className="flex items-start mt-[3px]">
        <div className="w-[613px] h-[20px] border-t border-l border-[#a0a0a0] pl-[4px] pt-[2px] leading-[18px] shrink-0 whitespace-pre">Rendering Time  0:00:56</div>
        <svg width="16" height="16" viewBox="0 0 16 16" className="ml-[2px] mt-[3px] shrink-0" fill="none" stroke="#555"><path d="M1 5l3-4h11v10l-3 4H1zM1 5h11v10M12 5l3-4" /></svg>
        <div className="ml-[6px] w-[100px] h-[20px] border-t border-l border-r border-[#c0c0c0] pl-[5px] pt-[2px] leading-[18px] shrink-0">Add Time Tag</div>
      </div>
    </div>
    <div className="mt-[4px] w-[42px] h-[43px] rounded-t-[3px] border border-[#8c8c8c] bg-gradient-to-b from-[#f4f4f4] to-[#cfcfcf] flex items-center justify-center shrink-0">
      <svg width="26" height="12" viewBox="0 0 26 12" fill="none" stroke="#111" strokeWidth="2"><circle cx="5" cy="6" r="3.500" /><path d="M9 6h16M19 6v4M24 6v4" /></svg>
    </div>
    <div className="ml-[5px] w-[165px] shrink-0 pt-[4px] flex flex-col gap-[2px]">
      <div className="flex gap-[4px]">
        <KeyBtn t="Auto Key" className="w-[46px] h-[20px]" />
        <Dropdown label="Selected" className="w-[115px] text-[10.8px]" />
      </div>
      <div className="flex items-start">
        <KeyBtn t="Set Key" className="w-[46px] h-[21px]" />
        <svg width="24" height="21" viewBox="0 0 24 21" fill="none" className="ml-[3px] shrink-0"><path d="M3 18q4-1 6-8t4-4 2 8 6 2" stroke="#c22" strokeWidth="1.400" /><path d="M2 19h18" stroke="#55a" /></svg>
        <KeyBtn t="Key Filters..." className="ml-[4px] w-[88px] h-[21px]" />
      </div>
    </div>
    <div className="ml-[3px] flex-1 flex flex-col">
      <div className="h-[24px] pt-[4px] flex items-center">
        <Tr w={28} d="M7 5v10M9 10l5-5v10zM14 10l5-5v10zM20 5v10" />
        <Tr w={24} d="M4 10l6-5v10zM12 5h2v10h-2zM16 5h2v10h-2z" />
        <Tr w={20} d="M5 5l10 5-10 5z" />
        <Tr w={24} className="ml-[2px]" d="M5 5h2v10H5zM9 5h2v10H9zM13 5l7 5-7 5z" />
        <Tr w={28} d="M6 5v10M8 5l5 5-5 5zM14 5l5 5-5 5zM20 5v10" />
        <div className="w-[3px] shrink-0" />
        <Nav><circle cx="8" cy="10" r="5.500" /><path d="M12 14l5 5M18 1v7M15 4h6" /></Nav>
        <Nav><rect x="2" y="3" width="16" height="14" /><path d="M10 3v14M2 10h16" /><circle cx="15" cy="14" r="3.500" fill="#fff" /></Nav>
        <Nav><path d="M3 6V3h3M17 3h3v3M3 15v3h3M20 15v3h-3" strokeWidth="1.400" /><path d="M7 9l2-2h8v8l-2 2H7zM7 9h8v8M15 9l2-2" /></Nav>
        <Nav><rect x="8" y="2" width="13" height="12" /><path d="M14 2v12M8 8h13" /><path d="M2 12l3-3h8v9l-3 3H2z" fill="#8cba58" stroke="#4c7c2c" /></Nav>
      </div>
      <div className="h-[23px] flex items-center">
        <Tr w={24} className="ml-[2px]" d="M6 5v10M8 10l4-5v10zM13 5l4 5-4 5zM18 5v10" />
        <div className="ml-[4px] flex items-center"><Field v="0" w="w-[62px]" /><div className="ml-[2px]"><Spinner /></div></div>
        <svg width="18" height="18" viewBox="0 0 18 18" className="ml-[5px] shrink-0" fill="none" stroke="#333"><rect x="1" y="1" width="14" height="15" fill="#eee" /><rect x="3" y="3" width="6" height="4" fill="#27508c" /><circle cx="13" cy="13" r="4" fill="#fff" /></svg>
        <div className="w-[2px] shrink-0" />
        <Nav><rect x="2" y="2" width="13" height="13" strokeDasharray="2 1.500" /><circle cx="14" cy="14" r="4" fill="#fff" /><path d="M17 17l4 4" /></Nav>
        <Nav><path d="M7 21q-3-4-4-8 2-1 3 1V5q2-2 2 0v6V3q2-2 2 0v8V4q2-2 2 0v7V6q2-1 2 1v8q0 4-2 6z" fill="#fff" /></Nav>
        <Nav><path d="M11 4v9L3 18M11 13l8 5" stroke="#222" /><path d="M11 8l6 5-6 5-6-5z" fill="#8cba58" stroke="#4c7c2c" /><path d="M9 4h4l-2-3z" fill="#222" /></Nav>
        <Nav><rect x="2" y="2" width="14" height="14" /><rect x="12" y="13" width="8" height="7" fill="#fff" /><path d="M6 6l6 6M6 10V6h4" /></Nav>
      </div>
    </div>
  </div>
);

const Taskbar = () => (
  <div className="h-[7px] flex bg-gradient-to-r from-[#9fb9d4] via-[#a9c3de] to-[#a5bfdb] border-t border-[#3a4a5c] overflow-hidden">
    <div className="ml-[13px] w-[28px] h-[28px] rounded-full bg-[#dfe8f0] border border-[#5a7a9a] shrink-0" />
    <div className="ml-[19px] w-[54px] h-full bg-[#c9d9e9] border-x border-[#7c93ab] shrink-0 flex justify-center"><div className="w-[14px] h-full bg-[#eed9a0] mt-[3px]" /></div>
    <div className="ml-[7px] w-[58px] h-full bg-[#c9d9e9] border-x border-[#7c93ab] shrink-0 flex justify-center"><div className="w-[14px] h-[14px] rounded-full bg-[#d8181e] mt-[2px]" /></div>
    <div className="ml-[25px] w-[18px] h-[14px] mt-[2px] rounded-full bg-[#4a90d0] border-t-2 border-[#e8c030] shrink-0" />
    <div className="ml-[74px] w-[54px] h-full bg-[#c9d9e9] border-x border-[#7c93ab] shrink-0 flex justify-center"><div className="w-[22px] h-full bg-[#dfe8f0] border border-[#a8b8c8] mt-[3px]" /></div>
    <div className="ml-[86px] w-[24px] h-full mt-[3px] bg-[#d8ecd0] border border-[#70b070] rounded-t-[3px] shrink-0" />
    <div className="ml-[26px] w-[22px] h-full mt-[3px] bg-[#dce0e4] border border-[#90a0a8] rounded-t-[3px] shrink-0" />
    <div className="ml-[40px] w-[22px] h-full mt-[3px] bg-[#f4d8c8] border border-[#e09070] rounded-t-[3px] shrink-0" />
    <div className="ml-[38px] w-[24px] h-full mt-[3px] bg-[#b8e4f4] border border-[#40b0d8] rounded-t-[8px] shrink-0" />
    <div className="ml-[38px] w-[24px] h-full mt-[3px] bg-[#2a70c0] shrink-0" />
    <div className="ml-[14px] w-[58px] h-full bg-[#e8eef4] border-x border-[#445] shrink-0 flex justify-center"><div className="w-[18px] h-full bg-[#1d8a8a] mt-[3px]" /></div>
    <div className="ml-auto w-[15px] h-full bg-[#8a9aaa] border-l border-[#667]" />
  </div>
);

export default function App() {
  return (
    <div className={`w-[1280px] h-[992px] overflow-hidden bg-[#f0f0f0] ${F}`}>
      <Header />
      <Toolbar />
      <div className="h-[854px] flex">
        <div className="w-[1100px] shrink-0 flex flex-col">
          <div className="relative h-[808px]">
            <Scene />
            <div className="absolute left-[3px] top-[4px] text-[10.5px] tracking-[-0.2px] leading-[16px] text-[#c6c6c6] whitespace-pre">[ + ] [ Orthographic ] [ Smooth + Highlights ]</div>
          </div>
          <div className="h-[20px] bg-[#f5f5f5] flex items-center shrink-0 border-t border-white">
            <div className="w-[150px] h-[17px] bg-[#eeeeee] flex items-center">
              <div className="w-0 h-0 ml-[1px] border-y-[4px] border-r-[4px] border-y-transparent border-r-[#555]" />
              <div className="ml-[8px] w-[123px] h-[15px] border border-[#5a88b0] bg-gradient-to-b from-[#d4ecfa] to-[#a4d0ee] text-[11.3px] leading-[14px] text-center text-[#222]">0 / 100</div>
              <div className="ml-[6px] w-0 h-0 border-y-[4px] border-l-[4px] border-y-transparent border-l-[#555]" />
            </div>
          </div>
          <div className="h-[26px] flex shrink-0 border-t border-[#aaa]">
            <div className="w-[38px] shrink-0 flex items-center justify-center bg-[#f0f0f0]">
              <svg width="18" height="18" viewBox="0 0 18 18" fill="none" stroke="#111"><rect x="1" y="1" width="16" height="5" /><path d="M2 4q3-3 6 0t7 0" /><path d="M5 8v5M3 10l2-2 2 2M12 8v5M10 11l2 2 2-2" /><rect x="1" y="14" width="16" height="3" fill="#222" /></svg>
            </div>
            <div className="-mt-px"><Ruler /></div>
          </div>
        </div>
        <CommandPanel />
      </div>
      <Status />
      <Taskbar />
    </div>
  );
}
